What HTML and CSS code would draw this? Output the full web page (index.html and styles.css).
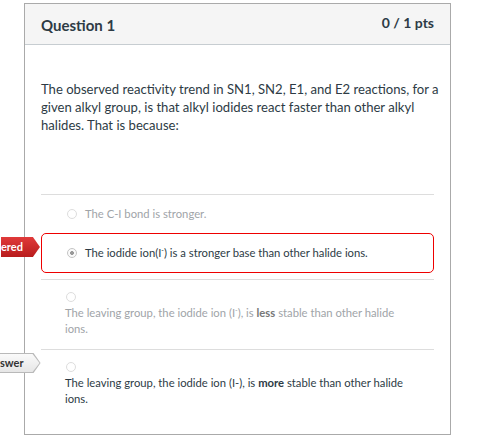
FILE: index.html
```html
<!DOCTYPE html>
<html lang="en">
<head>
  <meta charset="UTF-8">
  <title>Question 1</title>
  <link rel="stylesheet" href="styles.css">
</head>
<body>
  <div class="question">
    <div class="header">
      <h2 class="question-name">Question 1</h2>
      <span class="points">0 / 1 pts</span>
    </div>
    <div class="content">
      <p class="question-text">The observed reactivity trend in SN1, SN2, E1, and E2 reactions, for a given alkyl group, is that alkyl iodides react faster than other alkyl halides. That is because:</p>

      <div class="answers">
        <div class="answer muted">
          <span class="radio"></span>
          <span class="label">The C-I bond is stronger.</span>
        </div>
        <div class="answer selected wrong">
          <span class="arrow incorrect">ered</span>
          <span class="radio checked"></span>
          <span class="label">The iodide ion(I<sup>-</sup>) is a stronger base than other halide ions.</span>
        </div>
        <div class="answer muted stacked">
          <span class="radio"></span>
          <div class="label">The leaving group, the iodide ion (I<sup>-</sup>), is <b>less</b> stable than other halide ions.</div>
        </div>
        <div class="answer stacked last">
          <span class="arrow correct">swer</span>
          <span class="radio"></span>
          <div class="label">The leaving group, the iodide ion (I-), is <b>more</b> stable than other halide ions.</div>
        </div>
      </div>
    </div>
  </div>
</body>
</html>
```

FILE: styles.css
```css
body {
  margin: 0;
  font-family: Lato, "Open Sans", sans-serif;
  color: #2d3b45;
  background-color: #fff;
}
.question {
  margin: 3px 0 0 24px;
  width: 425px;
  border: 1px solid #aaa;
}
.header {
  display: flex;
  justify-content: space-between;
  height: 40px;
  padding: 0 16px;
  background-color: #f5f5f5;
  border-bottom: 1px solid #c7cdd1;
}
.question-name {
  margin: 0;
  padding-top: 12px;
  font-size: 15px;
  font-weight: bold;
}
.points {
  padding-top: 10px;
  font-size: 14px;
  font-weight: bold;
}
.content {
  padding: 35px 16px 27px 16px;
}
.question-text {
  margin: 0 -12px 0 0;
  font-size: 13.1px;
  line-height: 18px;
}
.answers {
  margin-top: 60px;
}
.answer {
  position: relative;
  display: flex;
  align-items: center;
  border-top: 1px solid #ddd;
  padding: 11px 0 11px 25px;
  font-size: 11.25px;
  line-height: 16px;
}
.answer.selected {
  border: 1px solid #e00;
  border-radius: 5px;
  padding: 11px 0 11px 24px;
  margin-bottom: 6px;
}
.answer.stacked {
  display: block;
  padding: 9px 0 12px 24px;
}
.answer.stacked .label {
  max-width: 340px;
}
.answer.last {
  padding-bottom: 0;
}
.answer sup {
  font-size: 7px;
  vertical-align: top;
  line-height: 10px;
}
.muted {
  color: #a0a4a8;
}
.muted b {
  color: #777;
}
.radio {
  display: inline-block;
  box-sizing: border-box;
  width: 10px;
  height: 10px;
  border: 1px solid #ddd;
  border-radius: 50%;
  margin: 0 8px 0 1px;
  background: #fff;
}
.stacked .radio {
  display: block;
  margin: 3px 0 3px 1px;
}
.radio.checked {
  border-color: #c4c4c4;
  background: radial-gradient(circle, #999 0 1.7px, #fafafa 2.2px);
}
.arrow {
  position: absolute;
  left: -41px;
  height: 20px;
  line-height: 20px;
  padding: 0 17px 0 0;
  font-size: 11px;
  font-weight: bold;
  white-space: nowrap;
  clip-path: polygon(0 0, calc(100% - 7px) 0, 100% 50%, calc(100% - 7px) 100%, 0 100%);
}
.arrow.incorrect {
  top: 3px;
  color: #fff;
  background: linear-gradient(#e03a3a, #b81c1c);
}
.arrow.correct {
  top: 3px;
  color: #333;
  background: #b9b9b9;
  isolation: isolate;
}
.arrow.correct::before {
  content: "";
  position: absolute;
  inset: 1px 1px 1px 0;
  background: linear-gradient(#fafafa, #e6e6e6);
  clip-path: polygon(0 0, calc(100% - 7px) 0, 100% 50%, calc(100% - 7px) 100%, 0 100%);
  z-index: -1;
}
```
